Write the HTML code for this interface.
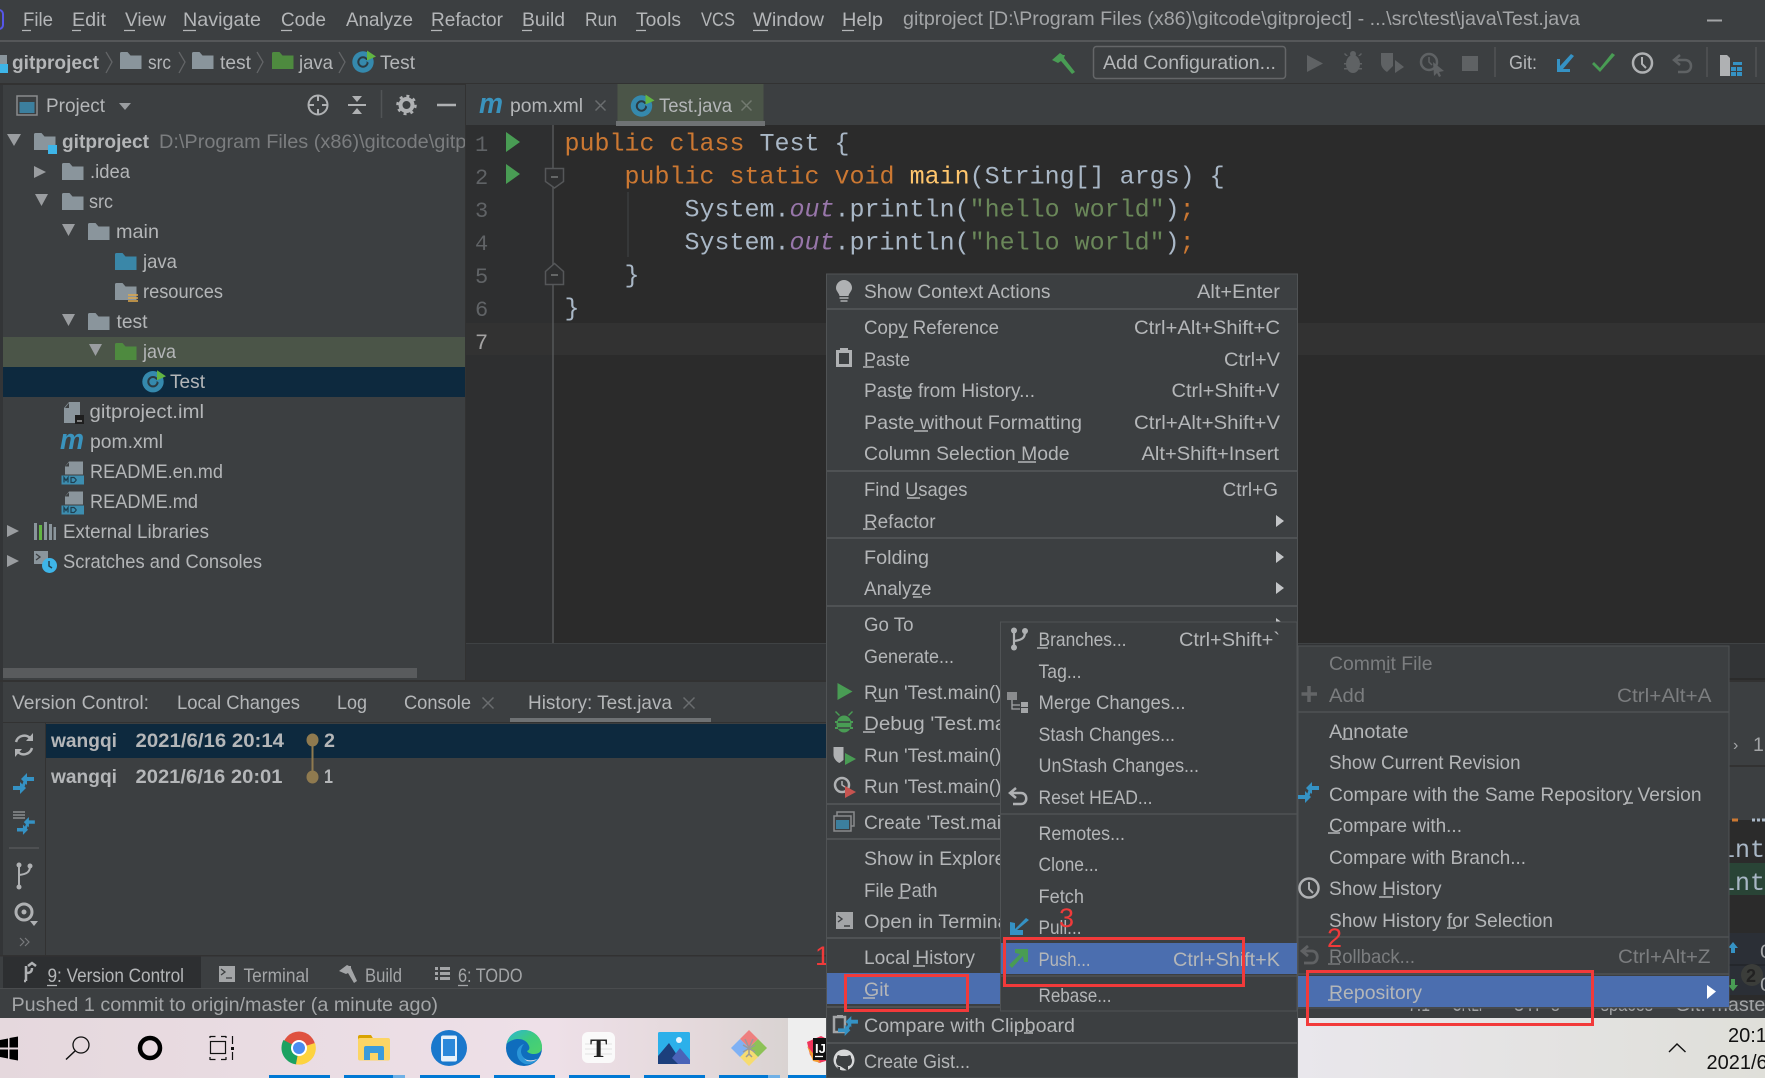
<!DOCTYPE html>
<html><head><meta charset="utf-8"><title>gitproject</title>
<style>
html,body{margin:0;padding:0;background:#3c3f41;overflow:hidden}
svg{display:block;position:absolute;left:0;top:0}
text{font-family:"Liberation Sans",sans-serif;font-size:19.5px;fill:#b4b6b8;white-space:pre}
.b{font-weight:bold}
.d{fill:#7b7d7f}
.g{fill:#a3a5a7}
.m{font-family:"Liberation Mono",monospace;font-size:25px;fill:#a9b7c6}
.k{fill:#cc7832}.s{fill:#6a8759}.o{fill:#9876aa;font-style:italic}.f{fill:#ffc66d}
.n{font-family:"Liberation Mono",monospace;font-size:22px;fill:#606366}
.r{fill:#f03a3a;font-size:27px}
.w{fill:#111;font-size:20px}
</style></head><body>
<svg width="1765" height="1078" viewBox="0 0 1765 1078" xmlns="http://www.w3.org/2000/svg">
<defs>
<path id="fo" d="M0 1.500a1.500 1.500 0 0 1 1.500-1.500h6l3 3.500h11v13.500h-21.500z"/>
<g id="ci"><circle cx="0" cy="0" r="10.700" fill="#3589ad"/><circle cx="0" cy="0" r="4.700" fill="none" stroke="#2b3a42" stroke-width="2"/><path d="M2 -2l4 3v-3z" fill="#3589ad"/><path d="M4 -11.500l9 6-9 4z" fill="#62b543"/></g>
<g id="cm"><path d="M14 0v4h7v4h-7v4l-6-6z" fill="#3592c4"/><path d="M7 9v4H0v4h7v4l6-6z" fill="#3592c4"/><path d="M11 7l-3 8h3l3-8z" fill="#3592c4"/></g>
<g id="md"><path d="M4 0h14v13H0V5z" fill="#8a959c"/><path d="M4 1v4H0z" fill="#3c3f41"/><rect x="-3.500" y="14" width="22.500" height="9" fill="#3d8eb0"/><path d="M-1 21v-5l2 3 2-3v5M6 16v5h3l2-2v-1l-2-2z" fill="none" stroke="#1f3f4f" stroke-width="1.200"/></g>
<linearGradient id="tb" x1="0" x2="1" y1="0" y2="0"><stop offset="0" stop-color="#e5d8dd"/><stop offset=".7" stop-color="#eee0e8"/><stop offset=".9" stop-color="#e3d8da"/><stop offset="1" stop-color="#d9d3d2"/></linearGradient>
<linearGradient id="tb2" x1="0" x2="1" y1="0" y2="0"><stop offset="0" stop-color="#e9e7ec"/><stop offset="1" stop-color="#dfdfd9"/></linearGradient>
<linearGradient id="eg" x1="0" x2="1" y1="0" y2="1"><stop offset="0" stop-color="#2bb5d8"/><stop offset=".5" stop-color="#3ecb7e"/><stop offset="1" stop-color="#4fd36a"/></linearGradient>
</defs>

<!-- base -->
<rect width="1765" height="1078" fill="#3c3f41"/>
<rect x="-10" y="10" width="13" height="19" rx="4" fill="none" stroke="#5656e8" stroke-width="2"/>

<!-- menu bar -->
<g>
<text x="23" y="26" textLength="30" lengthAdjust="spacingAndGlyphs">File</text>
<text x="72" y="26" textLength="34" lengthAdjust="spacingAndGlyphs">Edit</text>
<text x="125" y="26" textLength="41" lengthAdjust="spacingAndGlyphs">View</text>
<text x="183" y="26" textLength="78" lengthAdjust="spacingAndGlyphs">Navigate</text>
<text x="281" y="26" textLength="45" lengthAdjust="spacingAndGlyphs">Code</text>
<text x="346" y="26" textLength="67" lengthAdjust="spacingAndGlyphs">Analyze</text>
<text x="431" y="26" textLength="72" lengthAdjust="spacingAndGlyphs">Refactor</text>
<text x="522" y="26" textLength="43" lengthAdjust="spacingAndGlyphs">Build</text>
<text x="585" y="26" textLength="32" lengthAdjust="spacingAndGlyphs">Run</text>
<text x="636" y="26" textLength="45" lengthAdjust="spacingAndGlyphs">Tools</text>
<text x="701" y="26" textLength="34" lengthAdjust="spacingAndGlyphs">VCS</text>
<text x="753" y="26" textLength="71" lengthAdjust="spacingAndGlyphs">Window</text>
<text x="842" y="26" textLength="41" lengthAdjust="spacingAndGlyphs">Help</text>
<text class="g" x="903" y="25" textLength="677" lengthAdjust="spacingAndGlyphs">gitproject [D:\Program Files (x86)\gitcode\gitproject] - ...\src\test\java\Test.java</text>
<path d="M22 30.500h9M72 30.500h9M124 30.500h11M183 30.500h13M281 30.500h11M431 30.500h11M522 30.500h10M636 30.500h10M753 30.500h15M842 30.500h12" stroke="#b4b6b8" stroke-width="1.300" fill="none"/>
<path d="M1707 20.500h15" stroke="#a3a5a7" stroke-width="2"/>
</g>
<rect y="40" width="1765" height="2" fill="#555759"/>

<!-- breadcrumb -->
<rect x="-6" y="55" width="13" height="17" fill="#8a959c"/><rect x="0" y="64" width="8" height="9" fill="#3eb5e8"/>
<text class="b" x="12" y="69" textLength="87" lengthAdjust="spacingAndGlyphs">gitproject</text>
<path d="M106 52l6 10-6 11M179 52l6 10-6 11M257 52l6 10-6 11M339 52l6 10-6 11" fill="none" stroke="#636567" stroke-width="1.300"/>
<use href="#fo" x="120" y="52" fill="#8a959c"/>
<text x="148" y="69" textLength="23" lengthAdjust="spacingAndGlyphs">src</text>
<use href="#fo" x="192" y="52" fill="#8a959c"/>
<text x="220" y="69" textLength="31" lengthAdjust="spacingAndGlyphs">test</text>
<use href="#fo" x="272" y="52" fill="#4e8a3f"/>
<text x="299" y="69" textLength="34" lengthAdjust="spacingAndGlyphs">java</text>
<use href="#ci" x="363" y="62"/>
<text x="380" y="69" textLength="35" lengthAdjust="spacingAndGlyphs">Test</text>

<!-- toolbar -->
<path d="M1052 60l8-7 3 2 2 0-1 3 11 14-3 2-11-13-3 2z" fill="#499c54"/>
<rect x="1093.500" y="46.500" width="192" height="32" rx="3" fill="#3c3f41" stroke="#646668" stroke-width="1.500"/>
<text x="1103" y="69" textLength="173" lengthAdjust="spacingAndGlyphs">Add Configuration...</text>
<path d="M1307 55l16 8.500-16 8.500z" fill="#5f6264"/>
<g fill="#5f6264"><ellipse cx="1353" cy="64" rx="7" ry="9"/><path d="M1346 56l-2-2 1-1 3 3zM1360 56l2-2-1-1-3 3zM1344 63h18v1.500h-18zM1344 68h18v1.500h-18z"/><circle cx="1353" cy="54" r="3"/></g>
<path d="M1381 53h12v13l-6 6c-3-2-6-5-6-9z" fill="#5f6264"/><path d="M1395 60l9 7-9 6z" fill="#5f6264"/>
<circle cx="1429" cy="62" r="8" fill="none" stroke="#5f6264" stroke-width="2.500"/><path d="M1429 57v5l3 3" fill="none" stroke="#5f6264" stroke-width="1.500"/><path d="M1433 62l11 9-5 1 2 4-2 1-2-4-3 3z" fill="#5f6264"/>
<rect x="1462" y="56" width="16" height="15" fill="#5f6264"/>
<path d="M1495 47v30M1707 47v30M1756 47v30" stroke="#515456" stroke-width="1.500"/>
<text x="1509" y="69" textLength="28" lengthAdjust="spacingAndGlyphs">Git:</text>
<path d="M1574 56l-3-2-11 12v-7h-3v13h13v-3h-7z" fill="#3592c4"/>
<path d="M1594 62l6 6 12-15 3 2-15 17-8-8z" fill="#499c54"/>
<circle cx="1642.500" cy="63" r="9.500" fill="none" stroke="#afb1b3" stroke-width="2.500"/><path d="M1642 57v7l4 4" fill="none" stroke="#afb1b3" stroke-width="2"/>
<path d="M1680 55l-6 5 6 5M1675 60h10c8 0 8 12 0 12h-7" fill="none" stroke="#5f6264" stroke-width="2.500"/>
<path d="M1720 55h7l3 3v18h-10z" fill="#afb1b3"/><path d="M1733 62h9v3h-9zM1731 67h5v4h-5zM1737 67h5v4h-5zM1731 72h5v4h-5zM1737 72h5v4h-5z" fill="#3592c4"/>
<rect y="83" width="1765" height="2" fill="#323232"/>

<!-- project panel -->
<rect y="85" width="3" height="870" fill="#333537"/>
<rect x="17" y="96" width="20" height="19" fill="#3c3f41" stroke="#8a8c8e" stroke-width="1.500"/><rect x="19.500" y="102" width="15" height="11" fill="#3c7f9e"/>
<text x="46" y="112" textLength="59" lengthAdjust="spacingAndGlyphs">Project</text>
<path d="M119 103h12l-6 7z" fill="#9a9da0"/>
<circle cx="318" cy="105" r="9.500" fill="none" stroke="#afb1b3" stroke-width="2"/><path d="M318 95v6M318 109v6M308 105h6M322 105h6" stroke="#afb1b3" stroke-width="2"/>
<path d="M348 105h18" stroke="#afb1b3" stroke-width="2"/><path d="M352 96h10l-5 6zM352 114h10l-5-6z" fill="#afb1b3"/>
<path d="M381.500 90v28" stroke="#515456" stroke-width="1.500"/>
<circle cx="406.500" cy="105" r="6" fill="none" stroke="#afb1b3" stroke-width="4"/><circle cx="406.500" cy="105" r="9" fill="none" stroke="#afb1b3" stroke-width="2.500" stroke-dasharray="3 4"/>
<path d="M437 105h19" stroke="#afb1b3" stroke-width="2.500"/>

<!-- tree highlights -->
<rect x="3" y="337" width="462" height="30" fill="#4b5548"/>
<rect x="3" y="367" width="462" height="30" fill="#0d293e"/>

<!-- tree triangles -->
<g fill="#9a9da0">
<path d="M7 134h14l-7 12zM35 194h13l-6.500 12zM62 224h13l-6.500 12zM62 314h13l-6.500 12zM89 344h13l-6.500 12z"/>
<path d="M34 166l12 6-12 6zM7 525l12 6-12 6zM7 555l12 6-12 6z"/>
</g>

<!-- tree icons -->
<use href="#fo" x="34" y="133" fill="#8a959c"/><rect x="48" y="145" width="9" height="9" fill="#3eb5e8"/>
<use href="#fo" x="62" y="163" fill="#8a959c"/>
<use href="#fo" x="62" y="193" fill="#8a959c"/>
<use href="#fo" x="88" y="223" fill="#8a959c"/>
<use href="#fo" x="115" y="253" fill="#3a87a8"/>
<use href="#fo" x="115" y="283" fill="#8a959c"/><path d="M128 295h10M128 298h10M128 301h10" stroke="#e0a84a" stroke-width="1.500"/>
<use href="#fo" x="88" y="313" fill="#8a959c"/>
<use href="#fo" x="115" y="343" fill="#4e8a3f"/>
<use href="#ci" x="153" y="381.700"/>
<path d="M69 402h11v21H64V408z" fill="#8a959c"/><path d="M69 403v5h-4z" fill="#3c3f41"/><rect x="75" y="415" width="9" height="9" fill="#1e1e1e"/><path d="M77 421h5" stroke="#ddd" stroke-width="1"/>
<text x="60" y="449" style="font-size:29px;font-family:'Liberation Sans',sans-serif;font-weight:bold;font-style:italic;fill:#3a93bd" textLength="24" lengthAdjust="spacingAndGlyphs">m</text>
<use href="#md" x="65" y="461.500"/>
<use href="#md" x="65" y="491.500"/>
<path d="M34 523h3v17h-3zM44 522h3v18h-3zM49 524h3v16h-3zM53.500 527h2.500v13h-2.500z" fill="#8a959c"/><path d="M39 525h3v15h-3z" fill="#62b543"/>
<path d="M34 551h14v13H34z" fill="#8a959c"/><path d="M36 554l4 3-4 3" fill="none" stroke="#3c3f41" stroke-width="1.300"/>
<circle cx="49.500" cy="565.500" r="7.500" fill="#3eb5e8"/><path d="M49 561v5l3 2" fill="none" stroke="#24404e" stroke-width="1.500"/>

<!-- tree text -->
<text class="b" x="62" y="148" textLength="87" lengthAdjust="spacingAndGlyphs">gitproject</text>
<text class="d" x="159" y="148" textLength="356" lengthAdjust="spacingAndGlyphs">D:\Program Files (x86)\gitcode\gitproject</text>
<text x="90" y="178" textLength="40" lengthAdjust="spacingAndGlyphs">.idea</text>
<text x="89" y="208" textLength="24" lengthAdjust="spacingAndGlyphs">src</text>
<text x="116" y="238" textLength="43" lengthAdjust="spacingAndGlyphs">main</text>
<text x="143" y="268" textLength="34" lengthAdjust="spacingAndGlyphs">java</text>
<text x="143" y="298" textLength="80" lengthAdjust="spacingAndGlyphs">resources</text>
<text x="116.500" y="328" textLength="31" lengthAdjust="spacingAndGlyphs">test</text>
<text x="143" y="358" textLength="33" lengthAdjust="spacingAndGlyphs">java</text>
<text x="170" y="388" textLength="35" lengthAdjust="spacingAndGlyphs">Test</text>
<text x="89.500" y="418" textLength="114.500" lengthAdjust="spacingAndGlyphs">gitproject.iml</text>
<text x="90" y="448" textLength="73" lengthAdjust="spacingAndGlyphs">pom.xml</text>
<text x="90" y="478" textLength="133" lengthAdjust="spacingAndGlyphs">README.en.md</text>
<text x="90" y="508" textLength="108" lengthAdjust="spacingAndGlyphs">README.md</text>
<text x="63" y="538" textLength="146" lengthAdjust="spacingAndGlyphs">External Libraries</text>
<text x="63" y="568" textLength="199" lengthAdjust="spacingAndGlyphs">Scratches and Consoles</text>

<!-- scrollbar -->
<rect x="3" y="668" width="414" height="10" fill="#595b5d"/>

<!-- editor -->
<rect x="465" y="84" width="1300" height="41" fill="#3c3f41"/>
<rect x="465" y="125" width="1300" height="518" fill="#2b2b2b"/>
<rect x="465" y="125" width="88" height="518" fill="#2e2f30"/>
<rect x="465" y="323" width="1300" height="32" fill="#323232"/>
<rect x="465" y="643" width="1300" height="37" fill="#323436"/>
<rect x="465" y="643" width="1300" height="1" fill="#3f4244"/>
<rect x="465" y="84" width="1" height="596" fill="#323232"/>
<rect x="1729" y="678" width="36" height="2" fill="#2b2b2b"/>

<!-- tabs -->
<text x="479" y="113" style="font-size:29px;font-weight:bold;font-style:italic;fill:#3a93bd" textLength="24" lengthAdjust="spacingAndGlyphs">m</text>
<text x="510" y="112" textLength="73" lengthAdjust="spacingAndGlyphs">pom.xml</text>
<path d="M595.500 100.500l10 10M605.500 100.500l-10 10" stroke="#6a6d6f" stroke-width="1.500"/>
<rect x="617.500" y="84" width="146" height="37" fill="#4b5548"/>
<rect x="616" y="121" width="149" height="5" fill="#6f7274"/>
<use href="#ci" x="641.500" y="106"/>
<text x="659" y="112" textLength="73" lengthAdjust="spacingAndGlyphs">Test.java</text>
<path d="M741.500 100.500l10 10M751.500 100.500l-10 10" stroke="#727a70" stroke-width="1.500"/>

<!-- gutter -->
<path d="M553 125v518" stroke="#555759" stroke-width="1.500"/>
<text class="n" x="475" y="151">1</text><text class="n" x="475" y="184">2</text><text class="n" x="475" y="217">3</text><text class="n" x="475" y="250">4</text><text class="n" x="475" y="283">5</text><text class="n" x="475" y="316">6</text><text class="n" x="475" y="349" style="fill:#a4a3a3">7</text>
<path d="M506 132l14 10-14 10zM506 164l14 10-14 10z" fill="#499c54"/>
<path d="M545.500 168.500h18v13l-9 6.500-9-6.500z" fill="#2e2f30" stroke="#555759" stroke-width="1.500"/><path d="M551 177h7" stroke="#767879" stroke-width="1.500"/>
<path d="M545.500 284.500h18v-13l-9-8-9 8z" fill="#2e2f30" stroke="#555759" stroke-width="1.500"/><path d="M551 275h7" stroke="#767879" stroke-width="1.500"/>
<path d="M628 192v65" stroke="#3b3d3e" stroke-width="1.500"/>

<!-- code -->
<text class="m" x="564.500" y="150.500"><tspan class="k">public class</tspan> Test {</text>
<text class="m" x="624.500" y="183.500"><tspan class="k">public static void</tspan> <tspan class="f">main</tspan>(String[] args) {</text>
<text class="m" x="684.500" y="216.500">System.<tspan class="o">out</tspan>.println(<tspan class="s">"hello world"</tspan>)<tspan class="k">;</tspan></text>
<text class="m" x="684.500" y="249.500">System.<tspan class="o">out</tspan>.println(<tspan class="s">"hello world"</tspan>)<tspan class="k">;</tspan></text>
<text class="m" x="624.500" y="282.500">}</text>
<text class="m" x="564.500" y="315.500">}</text>

<!-- bottom panel -->
<rect x="0" y="680" width="1765" height="2" fill="#323232"/>
<text x="12" y="709" textLength="137" lengthAdjust="spacingAndGlyphs">Version Control:</text>
<text x="177" y="709" textLength="123" lengthAdjust="spacingAndGlyphs">Local Changes</text>
<text x="337" y="709" textLength="30" lengthAdjust="spacingAndGlyphs">Log</text>
<text x="404" y="709" textLength="67" lengthAdjust="spacingAndGlyphs">Console</text>
<path d="M482.500 697.500l11 11M493.500 697.500l-11 11" stroke="#6a6d6f" stroke-width="1.500"/>
<text x="528" y="709" textLength="144" lengthAdjust="spacingAndGlyphs">History: Test.java</text>
<path d="M683.500 697.500l11 11M694.500 697.500l-11 11" stroke="#6a6d6f" stroke-width="1.500"/>
<rect x="510" y="718" width="201" height="4" fill="#6f7274"/>
<rect x="3" y="722" width="1300" height="1" fill="#323232"/>
<path d="M45.500 723v232" stroke="#323232" stroke-width="1"/>
<rect x="46" y="724" width="800" height="34" fill="#0d293e"/>
<text class="b" x="51" y="747" textLength="66" lengthAdjust="spacingAndGlyphs">wangqi</text>
<text class="b" x="135.500" y="747" textLength="148.500" lengthAdjust="spacingAndGlyphs">2021/6/16 20:14</text>
<text class="b" x="51" y="783" textLength="66" lengthAdjust="spacingAndGlyphs">wangqi</text>
<text class="b" x="135.500" y="783" textLength="147" lengthAdjust="spacingAndGlyphs">2021/6/16 20:01</text>
<path d="M312.500 740v37" stroke="#8f7a4f" stroke-width="2"/>
<ellipse cx="312.500" cy="740" rx="6" ry="6.500" fill="#8f7a4f"/><ellipse cx="312.500" cy="777" rx="6" ry="6.500" fill="#8f7a4f"/>
<text class="b" x="324" y="747" textLength="11" lengthAdjust="spacingAndGlyphs">2</text>
<text class="b" x="324" y="783" textLength="9" lengthAdjust="spacingAndGlyphs">1</text>
<!-- side toolbar -->
<path d="M16 742a8.500 8.500 0 0 1 15-3M32 748a8.500 8.500 0 0 1-15 3" fill="none" stroke="#afb1b3" stroke-width="2.500"/><path d="M33 733v8h-7zM15 757v-8h7z" fill="#afb1b3"/>
<use href="#cm" x="13" y="773"/>
<path d="M13 812h12M13 815h12M13 818h12" stroke="#9a9da0" stroke-width="1.300"/><use href="#cm" transform="translate(17,817) scale(.85)"/>
<path d="M9 848h30" stroke="#555759" stroke-width="1.500"/>
<path d="M19 866v20M30 866c0 6-3 8-11 9" fill="none" stroke="#afb1b3" stroke-width="2"/><circle cx="19" cy="865" r="2.500" fill="#afb1b3"/><circle cx="19" cy="887" r="2.500" fill="#afb1b3"/><circle cx="30" cy="866" r="2.500" fill="#afb1b3"/>
<circle cx="24" cy="912" r="8" fill="none" stroke="#afb1b3" stroke-width="3"/><circle cx="24" cy="912" r="2.500" fill="#afb1b3"/><path d="M30 921h8l-4 5z" fill="#afb1b3"/>
<path d="M20 938l4 4-4 4M25 938l4 4-4 4" fill="none" stroke="#787a7c" stroke-width="1.200"/>

<!-- tool tabs -->
<rect x="0" y="955" width="1765" height="1.500" fill="#323232"/>
<rect x="3" y="956.500" width="198" height="31.500" fill="#2d2f31"/>
<rect x="0" y="988" width="1765" height="1" fill="#4a4c4e"/>
<path d="M26 966v15M26 981h-2M26 973c4 0 6-1 6-5M28 966l4-3 4 3" fill="none" stroke="#afb1b3" stroke-width="2.500"/>
<text x="47.500" y="982" textLength="136.500" lengthAdjust="spacingAndGlyphs">9: Version Control</text>
<path d="M47 985.500h10" stroke="#b4b6b8" stroke-width="1.300"/>
<rect x="219" y="966" width="16" height="16" fill="#a3a5a7"/><path d="M221 969l4 3-4 3M226 978h6" fill="none" stroke="#3c3f41" stroke-width="1.300"/>
<text class="g" x="243.500" y="982" textLength="65.500" lengthAdjust="spacingAndGlyphs">Terminal</text>
<path d="M339 971l8-6 2 1 2 0v2l6 13-3 2-6-10-2 1z" fill="#a3a5a7"/>
<text class="g" x="365" y="982" textLength="37" lengthAdjust="spacingAndGlyphs">Build</text>
<path d="M435 967h3v3h-3zM440 967h10v3h-10zM435 972h3v3h-3zM440 972h10v3h-10zM435 977h3v3h-3zM440 977h10v3h-10z" fill="#a3a5a7"/>
<text class="g" x="458" y="982" textLength="64.500" lengthAdjust="spacingAndGlyphs">6: TODO</text>
<path d="M458 985.500h10" stroke="#a3a5a7" stroke-width="1.300"/>

<!-- status bar -->
<text class="g" x="11.500" y="1011" textLength="426.500" lengthAdjust="spacingAndGlyphs">Pushed 1 commit to origin/master (a minute ago)</text>
<text class="g" x="1408" y="1011" textLength="22" lengthAdjust="spacingAndGlyphs">7:1</text>
<text class="g" x="1452" y="1011" textLength="35" lengthAdjust="spacingAndGlyphs">CRLF</text>
<text class="g" x="1513" y="1011" textLength="47" lengthAdjust="spacingAndGlyphs">UTF-8</text>
<text class="g" x="1587" y="1011" textLength="66" lengthAdjust="spacingAndGlyphs">4 spaces</text>
<text class="g" x="1675" y="1011" textLength="97" lengthAdjust="spacingAndGlyphs">Git: master</text>

<!-- right strip -->
<rect x="1729" y="765" width="36" height="2" fill="#323232"/>
<rect x="1729" y="820" width="36" height="180" fill="#2b2b2b"/>
<rect x="1729" y="863" width="36" height="32" fill="#294436"/>
<path d="M1732 820h6" stroke="#cc7832" stroke-width="3"/><path d="M1752 820h14" stroke="#a9b7c6" stroke-width="3" stroke-dasharray="3 2"/>
<text class="m" x="1720" y="857">int</text>
<text class="m" x="1720" y="890">int</text>
<rect x="1715" y="933" width="60" height="62" rx="10" fill="#2b2f36"/>
<path d="M1729 965h36" stroke="#24272c" stroke-width="2"/>
<path d="M1728 948l5-6 5 6h-3v5h-4v-5z" fill="#3592c4"/>
<path d="M1728 985l5 6 5-6h-3v-6h-4v6z" fill="#499c54"/>
<circle cx="1752" cy="975" r="11" fill="#3b3d3a"/><text x="1746" y="982" style="font-size:18px;font-weight:bold;fill:#222">2</text>
<text class="g" x="1760" y="958" textLength="12" lengthAdjust="spacingAndGlyphs">0</text>
<text class="g" x="1760" y="991" textLength="12" lengthAdjust="spacingAndGlyphs">0</text>
<text class="g" x="1733" y="750" style="font-size:16px">›</text>
<text class="g" x="1753" y="751">1</text>

<!-- taskbar -->
<rect x="0" y="1018" width="788" height="60" fill="url(#tb)"/>
<rect x="788" y="1018" width="510" height="60" fill="#eeeeee"/>
<rect x="1298" y="1018" width="467" height="60" fill="url(#tb2)"/>
<path d="M269 1075h61v3h-61zM344 1075h49v3h-49zM420 1075h60v3h-60zM494 1075h61v3h-61zM569 1075h61v3h-61zM644 1075h61v3h-61zM719 1075h49v3h-49zM788 1075h50v3h-50z" fill="#0078d4"/>
<path d="M393 1075h12v3h-12zM768 1075h12v3h-12z" fill="#6fb0e6"/>
<!-- win -->
<path d="M0 1040l8-1.500v9h-8zM9.500 1038l8.500-1.500v11h-8.500zM0 1049.500h8v9l-8-1.500zM9.500 1049.500h8.500v11l-8.500-1.500z" fill="#000"/>
<circle cx="81" cy="1045" r="8" fill="none" stroke="#111" stroke-width="1.300"/><path d="M75 1051l-9 8.500" stroke="#111" stroke-width="1.500"/>
<circle cx="150" cy="1048" r="10" fill="none" stroke="#000" stroke-width="4.500"/>
<path d="M210 1036.500h5.500M221 1036.500h5M210 1059.500h5.500M221 1059.500h5M210 1036v2M226 1036v2M210 1057v3M226 1057v3M232.500 1036v8M232.500 1052v8" stroke="#111" stroke-width="1.200"/><rect x="210.500" y="1041.500" width="15" height="12" fill="none" stroke="#111" stroke-width="1.200"/><rect x="231" y="1047" width="3" height="3" fill="#111"/>
<!-- chrome -->
<circle cx="299" cy="1048" r="16.500" fill="#df5240"/>
<path d="M299 1048L283.500 1040A16.500 16.500 0 0 0 296 1064.300z" fill="#1ba261"/>
<path d="M299 1048L296 1064.300A16.500 16.500 0 0 0 315 1043z" fill="#fdd33f"/>
<circle cx="299" cy="1048" r="8" fill="#fff"/><circle cx="299" cy="1048" r="6" fill="#4a8cf1"/>
<!-- explorer -->
<path d="M358 1037a2 2 0 0 1 2-2h11l3 5h-16z" fill="#d9a300"/><rect x="358" y="1038" width="32" height="22.500" rx="2" fill="#fcd565"/>
<path d="M364 1060v-12a2 2 0 0 1 2-2h16a2 2 0 0 1 2 2v12h-6v-7h-8v7z" fill="#3b9bdb"/>
<!-- phone -->
<circle cx="449" cy="1048" r="18" fill="#1a78cc"/><rect x="441" y="1035.500" width="16" height="26" rx="2" fill="#e7f1fa"/><rect x="443" y="1039" width="12" height="17" fill="#2b88da"/>
<!-- edge -->
<circle cx="524" cy="1048" r="18" fill="#0f6dbd"/>
<path d="M506.500 1044c2-9 9-14 17.500-14 10 0 18 8 18 17 0 5-4 7-8 7-3 0-6-1-7-3 3-1 3-4 1-7-3-5-10-6-15-4-3 1-5 2-6.500 4z" fill="url(#eg)"/>
<path d="M521 1052c1 6 6 9 12 8 2 0 4-1 6-2-4 5-9 7-14 6-5-2-8-6-8-11 0-4 3-8 7-9-2 2-3 5-3 8z" fill="#2a95d8"/>
<path d="M523 1058c4 3 9 3 14 1-2 2-6 3-10 2z" fill="#e9e0e6"/>
<!-- typora -->
<rect x="582" y="1032" width="33" height="31" rx="6" fill="#fafafa"/>
<path d="M585 1044h27M585 1049h27M585 1054h27" stroke="#e2e2e2" stroke-width="1"/>
<text x="590" y="1057" style="font-family:'Liberation Serif',serif;font-size:26px;fill:#222;font-weight:bold">T</text>
<!-- photos -->
<rect x="658" y="1032" width="32" height="32" rx="1.500" fill="#2cb0ea"/><circle cx="679" cy="1040" r="3" fill="#e8f6ff"/>
<path d="M658 1056l11-13 14 21h-25z" fill="#1c3f7c"/><path d="M672 1058l8-10 10 12v4h-12z" fill="#4a63b8"/>
<!-- git ext -->
<g transform="translate(749 1048)"><path d="M0 -18l9 9-9 9-9-9z" fill="#ee7f7f"/><path d="M18 0l-9 9-9-9 9-9z" fill="#8dc257"/><path d="M0 18l-9-9 9-9 9 9z" fill="#f6dc70"/><path d="M-18 0l9-9 9 9-9 9z" fill="#7fb1f4"/><path d="M-4 -9l4 9 4-9M0 0v7M-3 9l3-3 3 3M-6 -3l12 7M6 -3l-12 7" fill="none" stroke="#9a9a9a" stroke-width="1.500"/></g>
<!-- IJ -->
<path d="M807 1042l14-6 8 4v20l-10 3-9-8z" fill="#f0345a"/><path d="M807 1046l6 15 8 2z" fill="#f39c33"/>
<rect x="813" y="1038" width="18" height="22" fill="#111"/>
<text x="815" y="1053" style="font-size:13px;font-weight:bold;fill:#fff">IJ</text><path d="M815 1056.500h8" stroke="#fff" stroke-width="1.300"/>
<!-- tray -->
<path d="M1669 1052l8-8 8.500 8" fill="none" stroke="#111" stroke-width="1.400"/>
<text class="w" x="1728" y="1042">20:14</text>
<text class="w" x="1706.500" y="1069">2021/6/16</text>

<!-- red 1 below menu -->
<text class="r" x="815" y="965">1</text>

<!-- MENU 1 -->
<rect x="826.500" y="274" width="471" height="804" fill="#3c3f41" stroke="#505355" stroke-width="1"/>
<path d="M827 309h470M827 471h470M827 538h470M827 606h470M827 804h470M827 839h470M827 938h470M827 1007h470M827 1043h470" stroke="#4f5254" stroke-width="2"/>
<rect x="827" y="973" width="470" height="31" fill="#4b6eaf"/>

<g>
<text x="864" y="298" textLength="186.500" lengthAdjust="spacingAndGlyphs">Show Context Actions</text>
<text x="1197" y="298" textLength="83" lengthAdjust="spacingAndGlyphs">Alt+Enter</text>
<text x="864" y="334" textLength="135" lengthAdjust="spacingAndGlyphs">Copy Reference</text>
<text x="1134" y="334" textLength="146" lengthAdjust="spacingAndGlyphs">Ctrl+Alt+Shift+C</text>
<text x="864" y="366" textLength="46" lengthAdjust="spacingAndGlyphs">Paste</text>
<text x="1224" y="366" textLength="56" lengthAdjust="spacingAndGlyphs">Ctrl+V</text>
<text x="864" y="397" textLength="171" lengthAdjust="spacingAndGlyphs">Paste from History...</text>
<text x="1171.500" y="397" textLength="108" lengthAdjust="spacingAndGlyphs">Ctrl+Shift+V</text>
<text x="864" y="429" textLength="218" lengthAdjust="spacingAndGlyphs">Paste without Formatting</text>
<text x="1134" y="429" textLength="146" lengthAdjust="spacingAndGlyphs">Ctrl+Alt+Shift+V</text>
<text x="864" y="460" textLength="205.500" lengthAdjust="spacingAndGlyphs">Column Selection Mode</text>
<text x="1141.500" y="460" textLength="137.500" lengthAdjust="spacingAndGlyphs">Alt+Shift+Insert</text>
<text x="864" y="496" textLength="103.500" lengthAdjust="spacingAndGlyphs">Find Usages</text>
<text x="1222.500" y="496" textLength="55.500" lengthAdjust="spacingAndGlyphs">Ctrl+G</text>
<text x="864" y="528" textLength="71.500" lengthAdjust="spacingAndGlyphs">Refactor</text>
<text x="864" y="564" textLength="65" lengthAdjust="spacingAndGlyphs">Folding</text>
<text x="864" y="595" textLength="67.500" lengthAdjust="spacingAndGlyphs">Analyze</text>
<text x="864" y="631" textLength="49.500" lengthAdjust="spacingAndGlyphs">Go To</text>
<text x="864" y="663" textLength="90" lengthAdjust="spacingAndGlyphs">Generate...</text>
<text x="864" y="699" textLength="141" lengthAdjust="spacingAndGlyphs">Run 'Test.main()'</text>
<text x="864" y="730" textLength="176" lengthAdjust="spacingAndGlyphs">Debug 'Test.main()'</text>
<text x="864" y="762" textLength="141" lengthAdjust="spacingAndGlyphs">Run 'Test.main()'</text>
<text x="864" y="793" textLength="141" lengthAdjust="spacingAndGlyphs">Run 'Test.main()'</text>
<text x="864" y="829" textLength="164" lengthAdjust="spacingAndGlyphs">Create 'Test.main()'</text>
<text x="864" y="865" textLength="148" lengthAdjust="spacingAndGlyphs">Show in Explorer</text>
<text x="864" y="897" textLength="73.500" lengthAdjust="spacingAndGlyphs">File Path</text>
<text x="864" y="928" textLength="149" lengthAdjust="spacingAndGlyphs">Open in Terminal</text>
<text x="864" y="964" textLength="111" lengthAdjust="spacingAndGlyphs">Local History</text>
<text x="864" y="996" textLength="25" lengthAdjust="spacingAndGlyphs">Git</text>
<text x="864" y="1032" textLength="211" lengthAdjust="spacingAndGlyphs">Compare with Clipboard</text>
<text x="864" y="1068" textLength="106" lengthAdjust="spacingAndGlyphs">Create Gist...</text>
</g>
<path d="M899 337h9M863 367h11M899 398h11M914 431h14M1018 462h18M907 498h13M863 529h12M913 597h9M875 701h11M863 732h12M898 898h11M913 966h12M863 998h12M1024 1033h9" stroke="#b4b6b8" stroke-width="1.400" fill="none"/>
<path d="M1276 515l8 6-8 6zM1276 551l8 6-8 6zM1276 582l8 6-8 6zM1276 618l8 6-8 6z" fill="#c3c5c7"/>
<!-- menu 1 icons -->
<path d="M836 288a8 8 0 1 1 16 0c0 3-3 5-3.500 8h-9c-.5-3-3.500-5-3.500-8z" fill="#afb1b3"/><path d="M839.500 298h9M840.500 301h7" stroke="#afb1b3" stroke-width="1.500"/>
<rect x="837.500" y="351.500" width="13" height="14" fill="none" stroke="#afb1b3" stroke-width="3"/><rect x="840" y="348" width="8" height="5" fill="#afb1b3"/>
<path d="M837.500 683l15 8.500-15 8.500z" fill="#499c54"/>
<g fill="#499c54"><ellipse cx="844" cy="724" rx="7.500" ry="8.500"/><path d="M835 712l4 4 1-1-4-4zM853 712l-4 4-1-1 4-4zM835 721h18v2h-18zM835 727h18v2h-18z"/></g><path d="M838 722h12M838 728h12" stroke="#3c3f41" stroke-width="1.500"/>
<path d="M833.500 747h10v13l-4 3c-3-1-6-5-6-8z" fill="#afb1b3"/><path d="M845 753l11 6-11 6z" fill="#499c54"/>
<circle cx="842" cy="785" r="7" fill="none" stroke="#afb1b3" stroke-width="2.500"/><path d="M842 781v4l3 2" fill="none" stroke="#afb1b3" stroke-width="1.500"/><path d="M845 786l11 6-11 6z" fill="#c75450"/>
<rect x="837" y="812" width="17" height="14" fill="none" stroke="#8a8c8e" stroke-width="1.500"/><rect x="834" y="816" width="17" height="15" fill="#3c3f41" stroke="#8a8c8e" stroke-width="1.500"/><rect x="836" y="820" width="13" height="9" fill="#3c7f9e"/>
<rect x="836" y="912" width="17" height="17" fill="#a3a5a7"/><path d="M838 916l4 3-4 3M844 926h6" fill="none" stroke="#3c3f41" stroke-width="1.400"/>
<rect x="834" y="1017" width="11" height="15" fill="none" stroke="#a3a5a7" stroke-width="2.500"/><rect x="837" y="1015" width="6" height="3" fill="#a3a5a7"/>
<use href="#cm" transform="translate(838,1016) scale(.95)"/>
<circle cx="844" cy="1060" r="10.500" fill="#d7d8d9"/><path d="M840 1071v-4c-3 0-4-1-5-3M848 1071v-5c3 0 4-3 4-5 0-2-1-3-1-3 0-1 0-2-1-3l-3 1h-6l-3-1c-1 1-1 2-1 3 0 0-1 1-1 3 0 2 1 5 4 5" fill="#3c3f41"/>

<!-- MENU 2 -->
<rect x="1000.500" y="622" width="296.500" height="389" fill="#3c3f41" stroke="#505355" stroke-width="1"/>
<path d="M1001 814h296M1001 976h296" stroke="#4f5254" stroke-width="1.500"/>
<rect x="1001" y="943" width="296" height="31" fill="#4b6eaf"/>
<g>
<text x="1038.500" y="646" textLength="88" lengthAdjust="spacingAndGlyphs">Branches...</text>
<text x="1179" y="646" textLength="101" lengthAdjust="spacingAndGlyphs">Ctrl+Shift+`</text>
<text x="1038.500" y="678" textLength="43" lengthAdjust="spacingAndGlyphs">Tag...</text>
<text x="1038.500" y="709" textLength="147" lengthAdjust="spacingAndGlyphs">Merge Changes...</text>
<text x="1038.500" y="741" textLength="136.500" lengthAdjust="spacingAndGlyphs">Stash Changes...</text>
<text x="1038.500" y="772" textLength="160.500" lengthAdjust="spacingAndGlyphs">UnStash Changes...</text>
<text x="1038.500" y="804" textLength="114" lengthAdjust="spacingAndGlyphs">Reset HEAD...</text>
<text x="1038.500" y="840" textLength="86.500" lengthAdjust="spacingAndGlyphs">Remotes...</text>
<text x="1038.500" y="871" textLength="60" lengthAdjust="spacingAndGlyphs">Clone...</text>
<text x="1038.500" y="903" textLength="45.500" lengthAdjust="spacingAndGlyphs">Fetch</text>
<text x="1038.500" y="934" textLength="43" lengthAdjust="spacingAndGlyphs">Pull...</text>
<text x="1038.500" y="966" textLength="52" lengthAdjust="spacingAndGlyphs">Push...</text>
<text x="1173" y="966" textLength="107" lengthAdjust="spacingAndGlyphs">Ctrl+Shift+K</text>
<text x="1038.500" y="1002" textLength="73" lengthAdjust="spacingAndGlyphs">Rebase...</text>
</g>
<path d="M1037 648h11" stroke="#b4b6b8" stroke-width="1.400"/>
<!-- m2 icons -->
<path d="M1014 632v14M1025 632c0 6-3 8-11 9" fill="none" stroke="#afb1b3" stroke-width="2.200"/><circle cx="1014" cy="630.500" r="3" fill="#afb1b3"/><circle cx="1014" cy="647.500" r="3" fill="#afb1b3"/><circle cx="1025" cy="631" r="3" fill="#afb1b3"/>
<rect x="1007" y="692" width="10" height="8" fill="#8a8c8e"/><path d="M1012 700v9h8M1012 705h8" fill="none" stroke="#a3a5a7" stroke-width="1.300"/><rect x="1021" y="702" width="7" height="5" fill="#a3a5a7"/><rect x="1021" y="708" width="7" height="5" fill="#a3a5a7"/>
<path d="M1016 788l-6 5 6 5M1011 793h10c7 0 7 11 0 11h-8" fill="none" stroke="#afb1b3" stroke-width="2.500"/>
<path d="M1026 918l-11 11v-6l-5-1 0 13h13v-5h-6l12-10z" fill="#3592c4"/>
<path d="M1009 965l11-11-5-1v-4h13v13h-4l-1-6-11 12z" fill="#499c54"/>

<!-- MENU 3 -->
<rect x="1298" y="646" width="431" height="362" fill="#3c3f41" stroke="#505355" stroke-width="1"/>
<path d="M1298 712h431M1298 937h431M1298 974h431" stroke="#4f5254" stroke-width="1.500"/>
<rect x="1298" y="976" width="431" height="31" fill="#4b6eaf"/>
<g>
<text class="d" x="1329" y="670" textLength="103.500" lengthAdjust="spacingAndGlyphs">Commit File</text>
<text class="d" x="1329" y="702" textLength="36" lengthAdjust="spacingAndGlyphs">Add</text>
<text class="d" x="1617" y="702" textLength="94.500" lengthAdjust="spacingAndGlyphs">Ctrl+Alt+A</text>
<text x="1329" y="738" textLength="79.500" lengthAdjust="spacingAndGlyphs">Annotate</text>
<text x="1329" y="769" textLength="191.500" lengthAdjust="spacingAndGlyphs">Show Current Revision</text>
<text x="1329" y="801" textLength="372.500" lengthAdjust="spacingAndGlyphs">Compare with the Same Repository Version</text>
<text x="1329" y="832" textLength="133" lengthAdjust="spacingAndGlyphs">Compare with...</text>
<text x="1329" y="864" textLength="197" lengthAdjust="spacingAndGlyphs">Compare with Branch...</text>
<text x="1329" y="895" textLength="112.500" lengthAdjust="spacingAndGlyphs">Show History</text>
<text x="1329" y="927" textLength="224" lengthAdjust="spacingAndGlyphs">Show History for Selection</text>
<text class="d" x="1329" y="963" textLength="86" lengthAdjust="spacingAndGlyphs">Rollback...</text>
<text class="d" x="1618" y="963" textLength="92.500" lengthAdjust="spacingAndGlyphs">Ctrl+Alt+Z</text>
<text x="1329" y="999" textLength="93" lengthAdjust="spacingAndGlyphs">Repository</text>
</g>
<path d="M1385 672h5" stroke="#7b7d7f" stroke-width="1.400"/>
<path d="M1342 739h11M1625 803h8M1328 833h12M1379 897h14M1447 928h9M1328 1000h12" stroke="#b4b6b8" stroke-width="1.400"/>
<path d="M1328 964h12" stroke="#7b7d7f" stroke-width="1.400"/>
<path d="M1309 686v16M1301.500 694h15.500" stroke="#636567" stroke-width="3.500"/>
<use href="#cm" x="1298" y="782"/>
<circle cx="1309" cy="888" r="9.500" fill="none" stroke="#afb1b3" stroke-width="2.500"/><path d="M1309 882v7l4 4" fill="none" stroke="#afb1b3" stroke-width="2"/>
<path d="M1308 946l-6 5 6 5M1303 951h9c7 0 7 12 0 12h-8" fill="none" stroke="#606264" stroke-width="2.800"/>
<path d="M1707 985l9 6.500-9 7.500z" fill="#fff"/>

<!-- red annotations -->
<g fill="none" stroke="#f23a3a" stroke-width="3">
<rect x="845.500" y="975.500" width="122" height="35"/>
<rect x="1004.500" y="938.500" width="239" height="47"/>
<rect x="1307.500" y="971.500" width="285" height="53"/>
</g>
<text class="r" x="1327" y="947">2</text>
<text class="r" x="1059" y="927">3</text>
</svg>
</body></html>
